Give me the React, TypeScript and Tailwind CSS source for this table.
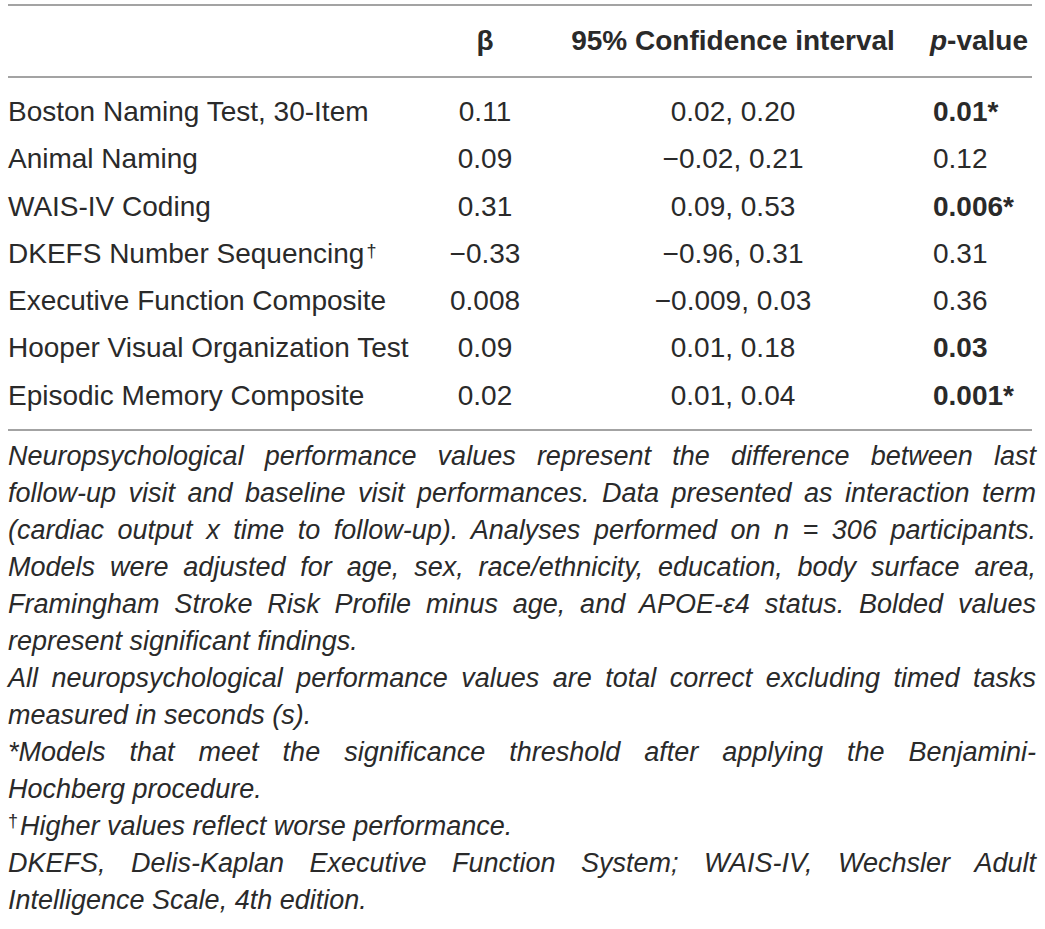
const rows = [
  { label: "Boston Naming Test, 30-Item", beta: "0.11", ci: "0.02, 0.20", p: "0.01*", bold: true },
  { label: "Animal Naming", beta: "0.09", ci: "−0.02, 0.21", p: "0.12", bold: false },
  { label: "WAIS-IV Coding", beta: "0.31", ci: "0.09, 0.53", p: "0.006*", bold: true },
  { label: "DKEFS Number Sequencing", dagger: true, beta: "−0.33", ci: "−0.96, 0.31", p: "0.31", bold: false },
  { label: "Executive Function Composite", beta: "0.008", ci: "−0.009, 0.03", p: "0.36", bold: false },
  { label: "Hooper Visual Organization Test", beta: "0.09", ci: "0.01, 0.18", p: "0.03", bold: true },
  { label: "Episodic Memory Composite", beta: "0.02", ci: "0.01, 0.04", p: "0.001*", bold: true },
];

// each footnote is split into its printed lines; all but the last line get justified
const notes: string[][] = [
  [
    "Neuropsychological performance values represent the difference between last",
    "follow-up visit and baseline visit performances. Data presented as interaction term",
    "(cardiac output x time to follow-up). Analyses performed on n = 306 participants.",
    "Models were adjusted for age, sex, race/ethnicity, education, body surface area,",
    "Framingham Stroke Risk Profile minus age, and APOE-ε4 status. Bolded values",
    "represent significant findings.",
  ],
  [
    "All neuropsychological performance values are total correct excluding timed tasks",
    "measured in seconds (s).",
  ],
  [
    "*Models that meet the significance threshold after applying the Benjamini-",
    "Hochberg procedure.",
  ],
  ["†Higher values reflect worse performance."],
  [
    "DKEFS, Delis-Kaplan Executive Function System; WAIS-IV, Wechsler Adult",
    "Intelligence Scale, 4th edition.",
  ],
];

function Note({ lines }: { lines: string[] }) {
  return (
    <div>
      {lines.map((line, i) => {
        const last = i === lines.length - 1;
        if (line.startsWith("†")) {
          return (
            <div key={i} className="whitespace-nowrap">
              <span className="not-italic text-[18px] align-[8px] leading-none mr-[2px]">†</span>
              {line.slice(1)}
            </div>
          );
        }
        return (
          <div
            key={i}
            className={last ? "whitespace-nowrap" : "text-justify [text-align-last:justify]"}
          >
            {line}
          </div>
        );
      })}
    </div>
  );
}

export default function App() {
  return (
    <div className="w-[1045px] h-[929px] bg-white pl-2 text-[#2a2a2a] font-['Liberation_Sans',Arial,sans-serif] overflow-hidden">
      <div className="w-[1024px] mt-1">
        <div className="h-[2px] bg-[#a3a3a3]" />
        <div className="grid grid-cols-[412px_130px_366px_116px] h-[70px] items-center text-[28px] font-bold">
          <div />
          <div className="text-center">β</div>
          <div className="text-center whitespace-nowrap">95% Confidence interval</div>
          <div className="pl-[14px] whitespace-nowrap">
            <span className="italic">p</span>-value
          </div>
        </div>
        <div className="h-[2px] bg-[#a3a3a3]" />
        <div className="py-[10px] text-[28px] leading-[47.3px]">
          {rows.map((r) => (
            <div key={r.label} className="grid grid-cols-[412px_130px_366px_116px]">
              <div className="whitespace-nowrap">
                {r.label}
                {r.dagger && <span className="text-[18px] align-[6px] leading-none ml-[2px]">†</span>}
              </div>
              <div className="text-center whitespace-nowrap">{r.beta}</div>
              <div className="text-center whitespace-nowrap">{r.ci}</div>
              <div className={"pl-[17px] whitespace-nowrap " + (r.bold ? "font-bold" : "")}>{r.p}</div>
            </div>
          ))}
        </div>
        <div className="h-[2px] bg-[#a3a3a3]" />
      </div>
      <div className="w-[1028px] mt-[7px] italic text-[27px] leading-[37px]">
        {notes.map((n, i) => (
          <Note key={i} lines={n} />
        ))}
      </div>
    </div>
  );
}
